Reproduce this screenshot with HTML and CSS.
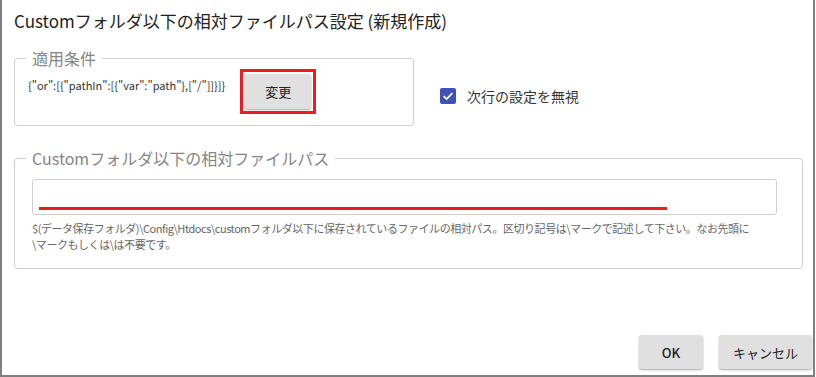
FILE: index.html
```html
<!DOCTYPE html>
<html lang="ja">
<head>
  <meta charset="UTF-8" />
  <title>Customフォルダ以下の相対ファイルパス設定</title>
  <link rel="stylesheet" href="styles.css">
</head>
<body>
  <div class="dialog">
    <h1 class="dialog-title">Customフォルダ以下の相対ファイルパス設定 (新規作成)</h1>

    <div class="cond-row">
      <fieldset class="group cond-group">
        <legend>適用条件</legend>
        <div class="cond-body">
          <span class="cond-json">{"or":[{"pathIn":[{"var":"path"},["/"]]}]}</span>
          <span class="mark-frame">
            <button type="button" class="btn btn-change">変更</button>
          </span>
        </div>
      </fieldset>

      <label class="check">
        <span class="check-box">
          <svg width="16" height="16" viewBox="0 0 16 16">
            <path d="M3.6 8.2 L6.6 11.1 L12.4 5.2" fill="none" stroke="#fff" stroke-width="1.8" />
          </svg>
        </span>
        <span>次行の設定を無視</span>
      </label>
    </div>

    <fieldset class="group path-group">
      <legend>Customフォルダ以下の相対ファイルパス</legend>
      <div class="path-body">
        <div class="path-input">
          <span class="mark-line"></span>
        </div>
        <p class="hint">$(データ保存フォルダ)\Config\Htdocs\customフォルダ以下に保存されているファイルの相対パス。区切り記号は\マークで記述して下さい。なお先頭に<br>\マークもしくは\は不要です。</p>
      </div>
    </fieldset>

    <div class="footer">
      <button type="button" class="btn btn-ok">OK</button>
      <button type="button" class="btn btn-cancel">キャンセル</button>
    </div>
  </div>
</body>
</html>
```

FILE: styles.css
```css
:root {
  --frame: #7f7f7f;
  --line: #cfcfcf;
  --legend: #858585;
  --text-main: #222;
  --btn-bg: #e0e0e0;
  --mark: #ed1c24;
  --check: #3f51b5;
}
body {
  margin: 0;
  font-family: "Noto Sans CJK JP", "Noto Sans", sans-serif;
  color: var(--text-main);
  background: #fff;
}
.dialog {
  width: 815px;
  height: 377px;
  box-sizing: border-box;
  border: 2px solid var(--frame);
  border-top: none;
  display: flex;
  flex-direction: column;
}
.dialog-title {
  margin: 0;
  padding: 9px 0 0 12px;
  font-size: 17px;
  font-weight: 400;
  line-height: 24px;
}
.group {
  margin: 0;
  border: 1px solid var(--line);
  border-radius: 4px;
  padding: 0 12px 0 11px;
  min-width: 0;
}
.group legend {
  padding: 0 6px;
  font-size: 16px;
  line-height: 20px;
  color: var(--legend);
}
.cond-row {
  display: flex;
  align-items: flex-start;
  margin: 15px 0 0 12px;
}
.cond-group {
  width: 400px;
  box-sizing: border-box;
  padding-bottom: 11px;
}
.cond-body {
  display: flex;
  align-items: flex-start;
  padding-top: 1px;
}
.cond-json {
  font-size: 11px;
  line-height: 16px;
  margin: 8px 15px 0 2px;
  color: #333;
}
.mark-frame {
  display: flex;
  border: 3px solid var(--mark);
  padding: 2px;
}
.btn {
  font-family: inherit;
  border: none;
  border-radius: 3px;
  background: var(--btn-bg);
  color: #222;
  box-shadow: 0 1px 2px rgba(0, 0, 0, 0.35);
  cursor: pointer;
  padding: 0;
}
.btn-change {
  width: 66px;
  height: 35px;
  font-size: 13px;
}
.check {
  display: flex;
  align-items: center;
  gap: 11px;
  margin: 38px 0 0 26px;
  font-size: 14px;
  color: #333;
}
.check-box {
  width: 16px;
  height: 16px;
  border-radius: 2px;
  background: var(--check);
  display: flex;
}
.path-group {
  margin: 22px 10px 0 12px;
  padding-bottom: 16px;
}
.path-body {
  padding: 11px 13px 0 6px;
}
.path-input {
  height: 36px;
  box-sizing: border-box;
  border: 1px solid var(--line);
  border-radius: 3px;
  display: flex;
  align-items: flex-end;
  padding: 0 0 4px 6px;
}
.mark-line {
  width: 628px;
  height: 3px;
  background: var(--mark);
}
.hint {
  margin: 5px 0 0 0;
  font-size: 11px;
  line-height: 16px;
  letter-spacing: -0.45px;
  color: #666;
}
.footer {
  margin-top: auto;
  display: flex;
  justify-content: flex-end;
  gap: 16px;
  padding: 0 1px 6px 0;
}
.btn-ok,
.btn-cancel {
  height: 34px;
  font-size: 13px;
}
.btn-ok {
  width: 64px;
  font-weight: 500;
}
.btn-cancel {
  width: 93px;
}
```
